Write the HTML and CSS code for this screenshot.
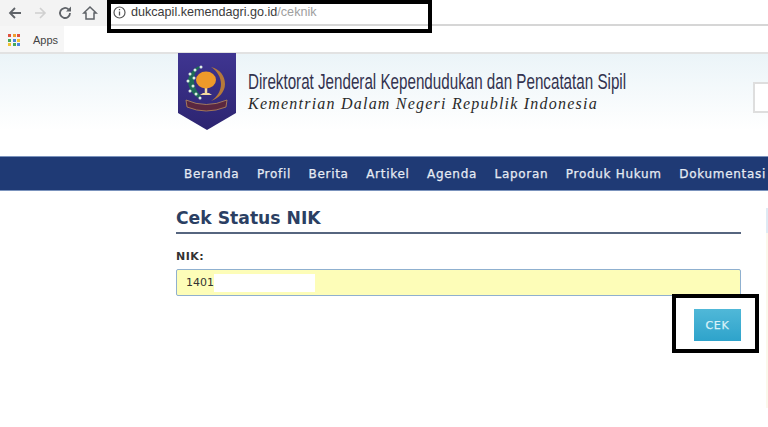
FILE: index.html
```html
<!doctype html>
<html lang="en">
  <head>
    <meta charset="UTF-8" />
    <meta name="viewport" content="width=device-width, initial-scale=1.0" />
    <title>Cek Status NIK</title>
    <link rel="stylesheet" href="styles.css">
  </head>
  <body>
    <div class="toolbar">
      <svg class="nav-icon" width="16" height="16" viewBox="0 0 16 16"><path d="M14 8H3M8 3L3 8l5 5" fill="none" stroke="#5f6368" stroke-width="1.8"/></svg>
      <svg class="nav-icon" width="16" height="16" viewBox="0 0 16 16"><path d="M3 8h10M8 3l5 5-5 5" fill="none" stroke="#d0d0d0" stroke-width="1.6"/></svg>
      <svg class="nav-icon" width="16" height="16" viewBox="0 0 16 16"><path d="M13 8a5 5 0 1 1-1.500-3.600" fill="none" stroke="#5f6368" stroke-width="1.8"/><path d="M14 1.500v5H9z" fill="#5f6368"/></svg>
      <svg class="nav-icon" width="16" height="16" viewBox="0 0 16 16"><path d="M8 2L1.800 8H4v6h8V8h2.200z" fill="none" stroke="#5f6368" stroke-width="1.5"/></svg>
      <div class="address">
        <svg width="13" height="13" viewBox="0 0 13 13"><circle cx="6.500" cy="6.500" r="5.500" fill="none" stroke="#555" stroke-width="1.2"/><path d="M6.500 5.500v4M6.500 3v1.300" stroke="#555" stroke-width="1.3"/></svg>
        <span class="host">dukcapil.kemendagri.go.id<span class="path">/ceknik</span></span>
      </div>
    </div>
    <div class="bookmarks">
      <div class="bookmark-apps">
        <div class="apps-grid">
          <i class="r"></i><i class="o"></i><i class="r"></i>
          <i class="g"></i><i class="b"></i><i class="y"></i>
          <i class="y"></i><i class="g"></i><i class="b"></i>
        </div>
        <span>Apps</span>
      </div>
    </div>

    <header class="site-header">
      <div class="brand">
        <svg class="crest" width="60" height="78" viewBox="0 0 60 78">
          <defs>
            <linearGradient id="shield" x1="0" y1="0" x2="0" y2="1">
              <stop offset="0" stop-color="#3f3591"/>
              <stop offset="1" stop-color="#2c2470"/>
            </linearGradient>
          </defs>
          <path d="M1 0h58v60L30 77 1 60z" fill="url(#shield)"/>
          <path d="M34 14c9 2 14 9 14 17 0 8-6 14-14 17 6-4 10-10 10-17s-4-13-10-17z" fill="#b5793a"/>
          <path d="M29 34v7" stroke="#f3d9a0" stroke-width="2.5"/>
          <path d="M23 42h12l-3-2h-6z" fill="#f3d9a0"/>
          <ellipse cx="29" cy="27" rx="10" ry="8.500" fill="#ee9a2a"/>
          <path d="M22 13c-6 3-10 8-11 14 0 7 3 13 10 18l3-2c-5-5-7-10-7-16s2-10 6-12z" fill="#1f6b58"/>
          <g fill="#dff0e4">
            <circle cx="24" cy="14" r="1.500"/><circle cx="18" cy="17" r="1.500"/><circle cx="13" cy="21" r="1.500"/>
            <circle cx="17" cy="25" r="1.500"/><circle cx="11" cy="28" r="1.500"/><circle cx="16" cy="33" r="1.500"/>
            <circle cx="13" cy="38" r="1.500"/><circle cx="19" cy="41" r="1.500"/><circle cx="23" cy="45" r="1.500"/>
          </g>
          <path d="M9 47q20 9 41 0l-1 7q-20 8-39 0z" fill="#5a2740" stroke="#b98a5a" stroke-width="0.8"/>
        </svg>
        <div class="brand-text">
          <div class="brand-title">Direktorat Jenderal Kependudukan dan Pencatatan Sipil</div>
          <div class="brand-sub">Kementrian Dalam Negeri Republik Indonesia</div>
        </div>
      </div>
      <div class="search-stub"></div>
    </header>

    <nav class="menu">
      <a>Beranda</a>
      <a>Profil</a>
      <a>Berita</a>
      <a>Artikel</a>
      <a>Agenda</a>
      <a>Laporan</a>
      <a>Produk Hukum</a>
      <a>Dokumentasi</a>
    </nav>

    <main class="content">
      <h1>Cek Status NIK</h1>
      <label class="field-label">NIK:</label>
      <div class="nik-input"><span>1401</span><span class="redact"></span></div>
      <div class="actions"><button class="cek-btn">CEK</button></div>
    </main>
    <div class="sidebar-edge"></div>

    <div class="mark mark-url"></div>
    <div class="mark mark-btn"></div>
  </body>
</html>
```

FILE: styles.css
```css
body {
  margin: 0;
  padding: 0;
  width: 768px;
  height: 427px;
  overflow: hidden;
  background: #fff;
  font-family: "DejaVu Sans", Verdana, sans-serif;
  position: relative;
}

.toolbar {
  height: 26px;
  display: flex;
  align-items: center;
  gap: 9px;
  padding-left: 7px;
  background: #f3f3f3;
  box-sizing: border-box;
}

.nav-icon {
  flex: none;
}

.address {
  display: flex;
  align-items: center;
  gap: 5px;
  margin-left: 1px;
  padding-left: 5px;
  flex: 1;
  height: 26px;
  box-sizing: border-box;
  background: #fff;
  border-bottom: 2px solid #d6d6d6;
}

.host {
  font-family: "Liberation Sans", Arial, sans-serif;
  font-size: 12.6px;
  color: #3c3c3c;
}

.path {
  color: #a0a0a0;
}

.bookmarks {
  height: 28px;
  box-sizing: border-box;
  background: #fff;
  border-bottom: 2px solid #e2e2e2;
}

.bookmark-apps {
  display: flex;
  align-items: center;
  gap: 13px;
  width: 64px;
  height: 100%;
  padding: 2px 0 0 8px;
  box-sizing: border-box;
  background: #f6f6f6;
  font-family: "Liberation Sans", Arial, sans-serif;
  font-size: 11px;
  color: #444;
}

.apps-grid {
  display: grid;
  grid-template-columns: repeat(3, 3px);
  grid-auto-rows: 3px;
  gap: 1.5px;
}

.apps-grid i { display: block; }
.apps-grid .r { background: #e0523f; }
.apps-grid .o { background: #f0a030; }
.apps-grid .g { background: #45a85a; }
.apps-grid .b { background: #4a86e0; }
.apps-grid .y { background: #f2c230; }

.site-header {
  height: 102px;
  display: flex;
  justify-content: space-between;
  background: linear-gradient(#ebf4f8, #fff 75%);
}

.brand {
  display: flex;
  align-items: flex-start;
  gap: 11px;
  margin-left: 177px;
  margin-top: -1px;
}

.brand-text {
  padding-top: 16px;
}

.brand-title {
  font-family: "Liberation Sans", sans-serif;
  font-size: 22px;
  line-height: 26px;
  color: #33334f;
  white-space: nowrap;
  transform: scaleX(0.69);
  transform-origin: left center;
  width: 379px;
}

.brand-sub {
  font-family: "Liberation Serif", serif;
  font-style: italic;
  font-size: 16px;
  line-height: 17px;
  letter-spacing: 1.22px;
  color: #2a2a2a;
  white-space: nowrap;
}

.search-stub {
  width: 15px;
  height: 31px;
  margin-top: 28px;
  border: 2px solid #dedede;
  border-right: none;
  box-sizing: border-box;
  background: #fff;
}

.menu {
  height: 35px;
  display: flex;
  align-items: center;
  gap: 17.5px;
  padding-left: 184px;
  background: #1f3a75;
  border-top: 1px solid #7b93bd;
  border-bottom: 1px solid #7b93bd;
  box-sizing: border-box;
  white-space: nowrap;
  font-size: 12px;
  letter-spacing: 0.7px;
  color: #e6ebf3;
  -webkit-text-stroke: 0.25px #e6ebf3;
}

.content {
  width: 565px;
  margin-left: 176px;
}

.content h1 {
  margin: 0;
  padding: 16px 0 3px;
  font-size: 17.2px;
  line-height: 22px;
  color: #2b3f63;
  border-bottom: 2px solid #56657f;
}

.field-label {
  display: block;
  margin-top: 16px;
  font-size: 11px;
  line-height: 14px;
  font-weight: bold;
  letter-spacing: 0.5px;
  color: #333;
}

.nik-input {
  display: flex;
  align-items: center;
  height: 27px;
  margin-top: 5px;
  padding-left: 9px;
  box-sizing: border-box;
  background: #fdfdb8;
  border: 1px solid #8fb0cf;
  border-radius: 2px;
  font-size: 11px;
  color: #333;
}

.redact {
  width: 101px;
  height: 18px;
  background: #fff;
}

.actions {
  display: flex;
  justify-content: flex-end;
  margin-top: 13px;
}

.cek-btn {
  width: 47px;
  height: 32px;
  padding: 0;
  border: none;
  background: linear-gradient(#50b8d8, #2ea3cb);
  color: #d9f1f8;
  font-family: "DejaVu Sans", sans-serif;
  font-size: 11px;
  letter-spacing: 0.8px;
  -webkit-text-stroke: 0.25px #d9f1f8;
}

.sidebar-edge {
  position: absolute;
  left: 766px;
  top: 208px;
  width: 2px;
  height: 200px;
  background: linear-gradient(#dfeaf3 25px, #fbf8ec 25px);
}

.mark {
  position: absolute;
  box-sizing: border-box;
  border: 4px solid #000;
}

.mark-url {
  left: 107px;
  top: 0;
  width: 325px;
  height: 33px;
}

.mark-btn {
  left: 672px;
  top: 294px;
  width: 87px;
  height: 59px;
}
```
